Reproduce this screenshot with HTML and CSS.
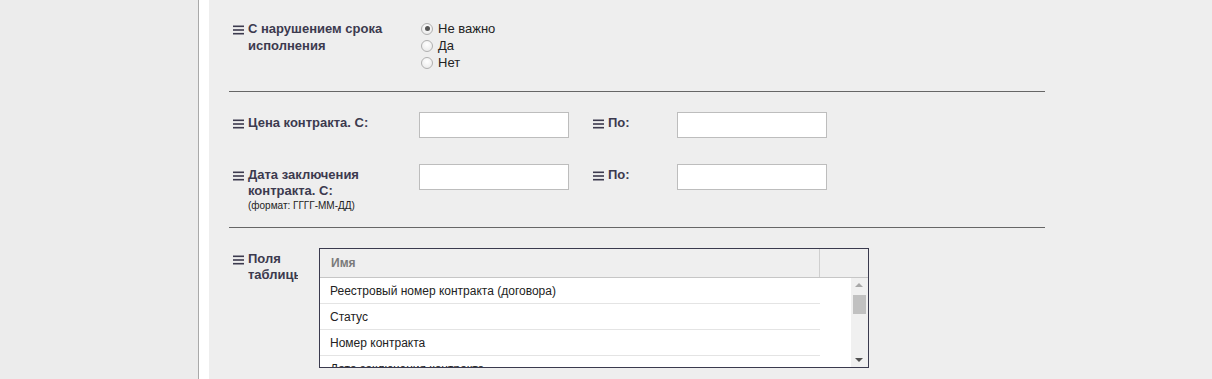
FILE: index.html
```html
<!DOCTYPE html>
<html lang="ru">
<head>
<meta charset="utf-8">
<link rel="stylesheet" href="styles.css">
</head>
<body>
<div class="page">
  <div class="gutter"></div>
  <div class="strip"></div>
  <div class="content">
    <div class="form">
      <div class="row row-radio">
        <div class="label">
          <svg class="ham" width="11" height="10" viewBox="0 0 11 10"><rect x="0" y="0.5" width="11" height="1.6"/><rect x="0" y="4.2" width="11" height="1.6"/><rect x="0" y="7.9" width="11" height="1.6"/></svg>
          <span>С нарушением срока исполнения</span>
        </div>
        <div class="radios">
          <label class="radio"><input type="radio" name="r" checked><span>Не важно</span></label>
          <label class="radio"><input type="radio" name="r"><span>Да</span></label>
          <label class="radio"><input type="radio" name="r"><span>Нет</span></label>
        </div>
      </div>
      <hr class="sep">
      <div class="row row-range">
        <div class="label">
          <svg class="ham" width="11" height="10" viewBox="0 0 11 10"><rect x="0" y="0.5" width="11" height="1.6"/><rect x="0" y="4.2" width="11" height="1.6"/><rect x="0" y="7.9" width="11" height="1.6"/></svg>
          <span>Цена контракта. С:</span>
        </div>
        <input class="field" type="text">
        <div class="label label-to">
          <svg class="ham" width="11" height="10" viewBox="0 0 11 10"><rect x="0" y="0.5" width="11" height="1.6"/><rect x="0" y="4.2" width="11" height="1.6"/><rect x="0" y="7.9" width="11" height="1.6"/></svg>
          <span>По:</span>
        </div>
        <input class="field" type="text">
      </div>
      <div class="row row-range row-date">
        <div class="label">
          <svg class="ham" width="11" height="10" viewBox="0 0 11 10"><rect x="0" y="0.5" width="11" height="1.6"/><rect x="0" y="4.2" width="11" height="1.6"/><rect x="0" y="7.9" width="11" height="1.6"/></svg>
          <span>Дата заключения контракта. С:<small class="hint">(формат: ГГГГ-ММ-ДД)</small></span>
        </div>
        <input class="field" type="text">
        <div class="label label-to">
          <svg class="ham" width="11" height="10" viewBox="0 0 11 10"><rect x="0" y="0.5" width="11" height="1.6"/><rect x="0" y="4.2" width="11" height="1.6"/><rect x="0" y="7.9" width="11" height="1.6"/></svg>
          <span>По:</span>
        </div>
        <input class="field" type="text">
      </div>
      <hr class="sep sep-after-date">
      <div class="row row-table">
        <div class="label label-narrow">
          <svg class="ham" width="11" height="10" viewBox="0 0 11 10"><rect x="0" y="0.5" width="11" height="1.6"/><rect x="0" y="4.2" width="11" height="1.6"/><rect x="0" y="7.9" width="11" height="1.6"/></svg>
          <span>Поля таблицы</span>
        </div>
        <div class="grid">
          <div class="grid-head">
            <div class="col-name">Имя</div>
            <div class="col-rest"></div>
          </div>
          <div class="grid-body">
            <div class="rows">
              <div class="cell">Реестровый номер контракта (договора)</div>
              <div class="cell">Статус</div>
              <div class="cell">Номер контракта</div>
              <div class="cell">Дата заключения контракта</div>
            </div>
            <div class="scrollbar">
              <div class="arrow up"></div>
              <div class="track"><div class="thumb"></div></div>
              <div class="arrow down"></div>
            </div>
          </div>
        </div>
      </div>
    </div>
  </div>
</div>
</body>
</html>
```
FILE: styles.css
```css
* { box-sizing: border-box; }
html, body { margin: 0; padding: 0; }
body {
  background: #eeeeee;
  font-family: "Liberation Sans", Arial, sans-serif;
  font-size: 12px;
  color: #222;
  height: 379px;
  overflow: hidden;
}
.page { display: flex; height: 379px; }
.gutter {
  width: 199px;
  flex: none;
  background: #ececec;
  border-right: 1px solid #a9a9a9;
}
.strip { width: 10px; flex: none; background: #ffffff; }
.content { flex: 1; background: #eeeeee; padding-left: 20px; }
.form { width: 816px; padding-top: 21px; }

.row { display: flex; padding-left: 4px; }
.label {
  display: flex;
  align-items: flex-start;
  gap: 4px;
  width: 186px;
  flex: none;
  font-weight: bold;
  font-size: 13px;
  line-height: 16px;
  color: #3c3a4e;
}
.label span { display: block; width: 140px; }
.ham { flex: none; fill: #3c3a4e; margin-top: 4px; }

.row-radio { height: 50px; }
.row-radio .label { line-height: 16.5px; }
.radios { display: flex; flex-direction: column; margin-top: -1px; }
.radio {
  display: flex;
  align-items: center;
  height: 17.5px;
  font-size: 13px;
  color: #222;
}
.radio input {
  appearance: none;
  -webkit-appearance: none;
  margin: 0 5px 0 2px;
  width: 12px;
  height: 12px;
  border-radius: 50%;
  border: 1px solid #b0b0b0;
  background: radial-gradient(circle at 50% 35%, #ffffff 0%, #e6e6e6 100%);
  position: relative;
}
.radio input:checked::after {
  content: "";
  position: absolute;
  left: 2.5px;
  top: 2.5px;
  width: 5px;
  height: 5px;
  border-radius: 50%;
  background: #555;
}

.sep {
  border: 0;
  border-top: 1px solid #666;
  margin: 20px 0 0 0;
  height: 0;
}
.sep-after-date { margin-top: 14px; }
.row-range { align-items: flex-start; margin-top: 20px; }
.row-range .label { margin-top: 3px; }
.row-date { margin-top: 26px; }
.label-to { width: 84px; margin-left: 24px; }
.label-to span { width: auto; }
.field {
  width: 150px;
  height: 26px;
  border: 1px solid #bdbdbd;
  background: #fff;
  flex: none;
  margin: 0;
  outline: none;
}
.hint {
  display: block;
  font-size: 10px;
  font-weight: normal;
  color: #222;
  line-height: 14px;
}

.row-table { margin-top: 20px; }
.label-narrow { width: 65px; overflow: hidden; margin-top: 3px; }
.label-narrow span { width: 60px; }
.grid {
  margin-left: 21px;
  width: 550px;
  height: 120px;
  border: 1px solid #3a3a4e;
  background: #fff;
  display: flex;
  flex-direction: column;
  overflow: hidden;
}
.grid-head {
  display: flex;
  height: 29px;
  flex: none;
  background: #efefef;
  border-bottom: 1px solid #c6c6c6;
}
.col-name {
  width: 500px;
  border-right: 1px solid #cfcfcf;
  padding-left: 11px;
  line-height: 28px;
  font-weight: bold;
  color: #7a7a7a;
}
.col-rest { flex: 1; }
.grid-body { flex: 1; display: flex; overflow: hidden; }
.rows { width: 500px; flex: none; }
.cell {
  height: 26px;
  line-height: 26px;
  padding-left: 10px;
  border-bottom: 1px solid #e4e4e4;
  color: #222;
  white-space: nowrap;
}
.scrollbar {
  margin-left: auto;
  width: 17px;
  display: flex;
  flex-direction: column;
  background: #f0f0f0;
}
.arrow { height: 13px; position: relative; }
.arrow.up::after, .arrow.down::after {
  content: "";
  position: absolute;
  left: 4px;
  border-left: 4px solid transparent;
  border-right: 4px solid transparent;
}
.arrow.up::after { top: 5px; border-bottom: 4px solid #a8a8a8; }
.arrow.down::after { top: 4px; border-top: 4px solid #505050; }
.track { flex: 1; padding: 4px 2px 0 2px; }
.thumb { height: 19px; background: #c1c1c1; }
```
